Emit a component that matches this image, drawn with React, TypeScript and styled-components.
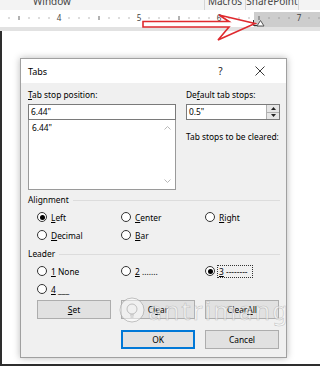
import React from "react"
import styled, { createGlobalStyle, css } from "styled-components"

const GlobalStyle = createGlobalStyle`
	html, body {
		margin: 0;
		padding: 0;
		background: #ffffff;
	}
	body {
		font-family: "Noto Sans", "Open Sans", sans-serif;
		overflow: hidden;
	}
	* {
		box-sizing: border-box;
	}
`

type OptionProps = {
	checked?: boolean
	focused?: boolean
	children: React.ReactNode
}

const ticks = Array.from({ length: 32 }, (_, i) => 9 + i * 10)

const RulerDrawing = () => (
	<svg width="320" height="15" viewBox="0 0 320 15">
		<rect x="0" y="0" width="254" height="15" fill="#ffffff" />
		<rect x="254" y="0" width="66" height="15" fill="#cdcdcd" />
		{ticks.map((x) => {
			if ((x - 59) % 80 === 0)
				return (
					<text key={x} x={x} y="9" fontSize="8" fill="#444" textAnchor="middle" fontFamily="Noto Sans, sans-serif">
						{(x - 59) / 80 + 4}
					</text>
				)
			if ((x - 19) % 80 === 0) return <rect key={x} x={x - 0.5} y="4" width="1" height="4" fill="#666" />
			return <rect key={x} x={x - 0.5} y="5.5" width="1" height="1" fill="#777" />
		})}
		<path d="M253.5 8 V13.5 H257" stroke="#333" strokeWidth="1" fill="none" />
		<path d="M257 14 L260.5 8.5 L264 14 Z" stroke="#555" strokeWidth="1" fill="#fff" />
	</svg>
)

const RedArrow = () => (
	<svg width="320" height="44" viewBox="0 0 320 44">
		<polygon
			points="143,21.5 229,21.5 219,15 255,23.5 218,40 229,27 143,27"
			fill="none"
			stroke="#df2a2f"
			strokeWidth="1.6"
			strokeLinejoin="miter"
		/>
	</svg>
)

const Option = ({ checked, focused, children }: OptionProps) => (
	<OptionLabel>
		<Radio $checked={checked} />
		<OptionText $focused={focused}>{children}</OptionText>
	</OptionLabel>
)

const App = () => {
	return (
		<Screen>
			<GlobalStyle />
			<MenuStrip>
				<MenuItem $width={104}>Window</MenuItem>
				<Spacer />
				<MenuItem $width={41} $divider>
					Macros
				</MenuItem>
				<MenuItem $width={53} $divider>
					SharePoint
				</MenuItem>
				<MenuItem $width={22} $divider />
			</MenuStrip>
			<RulerArea>
				<RulerDrawing />
			</RulerArea>
			<RulerShade />
			<Page>
				<Dialog>
					<TitleBar>
						<Title>Tabs</Title>
						<TitleButton>?</TitleButton>
						<TitleButton>
							<svg width="10" height="10" viewBox="0 0 10 10">
								<path d="M0.5 0.5 L9.5 9.5 M9.5 0.5 L0.5 9.5" stroke="#222" strokeWidth="0.9" />
							</svg>
						</TitleButton>
					</TitleBar>
					<Body>
						<TopSection>
							<Column>
								<Label>
									<U>T</U>ab stop position:
								</Label>
								<Input>6.44"</Input>
								<ListBox>
									<ListItem>6.44"</ListItem>
									<ScrollArrows>
										<svg width="7" height="4" viewBox="0 0 7 4">
											<path d="M0.5 3.5 L3.5 0.5 L6.5 3.5" stroke="#b8b8b8" fill="none" />
										</svg>
										<svg width="7" height="4" viewBox="0 0 7 4">
											<path d="M0.5 0.5 L3.5 3.5 L6.5 0.5" stroke="#b8b8b8" fill="none" />
										</svg>
									</ScrollArrows>
								</ListBox>
							</Column>
							<Column>
								<Label>
									De<U>f</U>ault tab stops:
								</Label>
								<SpinBox>
									<SpinValue>0.5"</SpinValue>
									<SpinButtons>
										<SpinButton>
											<svg width="5" height="3" viewBox="0 0 5 3">
												<path d="M0 3 L2.5 0 L5 3 Z" fill="#222" />
											</svg>
										</SpinButton>
										<SpinButton>
											<svg width="5" height="3" viewBox="0 0 5 3">
												<path d="M0 0 L2.5 3 L5 0 Z" fill="#222" />
											</svg>
										</SpinButton>
									</SpinButtons>
								</SpinBox>
								<ClearedLabel>Tab stops to be cleared:</ClearedLabel>
							</Column>
						</TopSection>

						<Group>
							<Legend>Alignment</Legend>
						</Group>
						<OptionGrid>
							<Option checked>
								<U>L</U>eft
							</Option>
							<Option>
								<U>C</U>enter
							</Option>
							<Option>
								<U>R</U>ight
							</Option>
							<Option>
								<U>D</U>ecimal
							</Option>
							<Option>
								<U>B</U>ar
							</Option>
						</OptionGrid>

						<Group>
							<Legend>Leader</Legend>
						</Group>
						<OptionGrid>
							<Option>
								<U>1</U> None
							</Option>
							<Option>
								<U>2</U> .......
							</Option>
							<Option checked focused>
								<U>3</U> --------
							</Option>
							<Option>
								<U>4</U> ___
							</Option>
						</OptionGrid>

						<ButtonGrid>
							<Button>
								<U>S</U>et
							</Button>
							<Button>
								Cl<U>e</U>ar
							</Button>
							<Button>
								Clear <U>A</U>ll
							</Button>
						</ButtonGrid>
						<ButtonGrid $bottom>
							<Button $default>OK</Button>
							<Button>Cancel</Button>
						</ButtonGrid>
					</Body>
				</Dialog>
			</Page>
			<ArrowLayer>
				<RedArrow />
			</ArrowLayer>
			<Watermark>
				<WatermarkLogo>
					<svg width="28" height="26" viewBox="0 0 28 26">
						<circle cx="14" cy="13" r="12" fill="rgba(255,255,255,0.5)" stroke="rgba(150,150,150,0.55)" strokeWidth="1" />
						<circle cx="14" cy="12" r="5" fill="none" stroke="rgba(150,150,150,0.55)" strokeWidth="1" />
						<path d="M12 18 H16 M12.5 20 H15.5" stroke="rgba(150,150,150,0.55)" strokeWidth="1" />
					</svg>
				</WatermarkLogo>
				<WatermarkText>antrimang</WatermarkText>
			</Watermark>
		</Screen>
	)
}

const Screen = styled.div`
	position: relative;
	width: 320px;
	height: 366px;
	overflow: hidden;
	background: #ffffff;
	display: flex;
	flex-direction: column;
`

const MenuStrip = styled.div`
	height: 10px;
	background: #f3f3f3;
	display: flex;
	overflow: hidden;
`

const MenuItem = styled.div<{ $width: number; $divider?: boolean }>`
	width: ${({ $width }) => $width}px;
	flex: none;
	font-size: 10px;
	line-height: 10px;
	color: #444;
	text-align: center;
	margin-top: -4px;
	height: 14px;
	${({ $divider }) =>
		$divider &&
		css`
			border-left: 1px solid #d4d4d4;
		`}
`

const Spacer = styled.div`
	flex: 1;
`

const RulerArea = styled.div`
	height: 17px;
	padding-top: 2px;
	background: #ffffff;
	display: flex;
	& svg {
		display: block;
	}
`

const RulerShade = styled.div`
	height: 4px;
	background: #e2e2e2;
`

const Page = styled.div`
	flex: 1;
	border-left: 2px solid #2e2e2e;
	border-bottom: 2px solid #2e2e2e;
	padding: 27px 0 0 18px;
`

const Dialog = styled.div`
	width: 267px;
	height: 300px;
	border: 1px solid #a0a0a0;
	background: #f0f0f0;
	box-shadow: 0 0 7px rgba(0, 0, 0, 0.28);
	display: flex;
	flex-direction: column;
`

const TitleBar = styled.div`
	height: 24px;
	background: #ffffff;
	display: flex;
	align-items: center;
	padding-left: 7px;
	padding-right: 7px;
`

const Title = styled.div`
	flex: 1;
	font-size: 9px;
	color: #000;
`

const TitleButton = styled.div`
	width: 39px;
	display: flex;
	justify-content: center;
	align-items: center;
	font-size: 10px;
	color: #222;
	& svg {
		display: block;
	}
`

const Body = styled.div`
	flex: 1;
	padding: 6px 6px 6px 7px;
	display: flex;
	flex-direction: column;
	font-size: 8.4px;
	color: #000;
`

const TopSection = styled.div`
	display: grid;
	grid-template-columns: 148px 94px;
	column-gap: 10px;
`

const Column = styled.div`
	display: flex;
	flex-direction: column;
`

const Label = styled.div`
	height: 12px;
	line-height: 12px;
	margin-bottom: 3px;
`

const U = styled.span`
	text-decoration: underline;
	text-underline-offset: 1px;
`

const Input = styled.div`
	height: 16px;
	border: 1px solid #7a7a7a;
	background: #ffffff;
	padding-left: 2px;
	line-height: 14px;
`

const ListBox = styled.div`
	position: relative;
	height: 70px;
	border: 1px solid #9a9a9a;
	border-top: none;
	background: #ffffff;
	padding: 2px 0 0 3px;
`

const ListItem = styled.div`
	line-height: 12px;
`

const ScrollArrows = styled.div`
	position: absolute;
	right: 4px;
	top: 6px;
	bottom: 6px;
	display: flex;
	flex-direction: column;
	justify-content: space-between;
	& svg {
		display: block;
	}
`

const SpinBox = styled.div`
	height: 16px;
	border: 1px solid #7a7a7a;
	background: #ffffff;
	display: flex;
`

const SpinValue = styled.div`
	flex: 1;
	padding-left: 2px;
	line-height: 14px;
`

const SpinButtons = styled.div`
	width: 13px;
	display: flex;
	flex-direction: column;
	border-left: 1px solid #b0b0b0;
`

const SpinButton = styled.div`
	flex: 1;
	background: #e6e6e6;
	display: flex;
	align-items: center;
	justify-content: center;
	& + & {
		border-top: 1px solid #b0b0b0;
	}
	& svg {
		display: block;
	}
`

const ClearedLabel = styled.div`
	margin-top: 11px;
	line-height: 12px;
`

const Group = styled.div`
	margin-top: 4px;
	height: 12px;
	display: flex;
	align-items: center;
	gap: 4px;
	&::after {
		content: "";
		flex: 1;
		height: 1px;
		background: #dcdcdc;
	}
`

const Legend = styled.span`
	line-height: 12px;
`

const OptionGrid = styled.div`
	margin-top: 2px;
	padding-left: 9px;
	display: grid;
	grid-template-columns: 84px 84px 74px;
	grid-auto-rows: 18px;
`

const OptionLabel = styled.div`
	display: flex;
	align-items: center;
	gap: 3px;
`

const Radio = styled.span<{ $checked?: boolean }>`
	position: relative;
	width: 10px;
	height: 10px;
	flex: none;
	border-radius: 50%;
	border: 1px solid #333;
	background: #ffffff;
	${({ $checked }) =>
		$checked &&
		css`
			&::after {
				content: "";
				position: absolute;
				inset: 1.5px;
				border-radius: 50%;
				background: #000;
			}
		`}
`

const OptionText = styled.span<{ $focused?: boolean }>`
	line-height: 11px;
	padding: 0 1px;
	${({ $focused }) =>
		$focused &&
		css`
			outline: 1px dotted #333;
			outline-offset: 0;
			padding-right: 4px;
		`}
`

const ButtonGrid = styled.div<{ $bottom?: boolean }>`
	margin-top: ${({ $bottom }) => ($bottom ? 11 : 2)}px;
	padding-left: 9px;
	display: grid;
	grid-template-columns: 74px 74px 74px;
	column-gap: 10px;
	${({ $bottom }) =>
		$bottom &&
		css`
			& > :first-child {
				grid-column-start: 2;
			}
		`}
`

const Button = styled.div<{ $default?: boolean }>`
	height: 19px;
	background: #e1e1e1;
	border: 1px solid #adadad;
	display: flex;
	align-items: center;
	justify-content: center;
	${({ $default }) =>
		$default &&
		css`
			border: 2px solid #0078d7;
		`}
`

const ArrowLayer = styled.div`
	position: absolute;
	left: 0;
	top: 0;
	pointer-events: none;
	& svg {
		display: block;
	}
`

const Watermark = styled.div`
	position: absolute;
	left: 118px;
	top: 297px;
	display: flex;
	align-items: center;
	gap: 2px;
	pointer-events: none;
`

const WatermarkLogo = styled.div`
	& svg {
		display: block;
	}
`

const WatermarkText = styled.span`
	font-family: "Noto Sans", sans-serif;
	font-size: 25px;
	line-height: 26px;
	letter-spacing: 2px;
	color: rgba(255, 255, 255, 0.5);
	-webkit-text-stroke: 0.6px rgba(150, 150, 150, 0.5);
`

export default App
